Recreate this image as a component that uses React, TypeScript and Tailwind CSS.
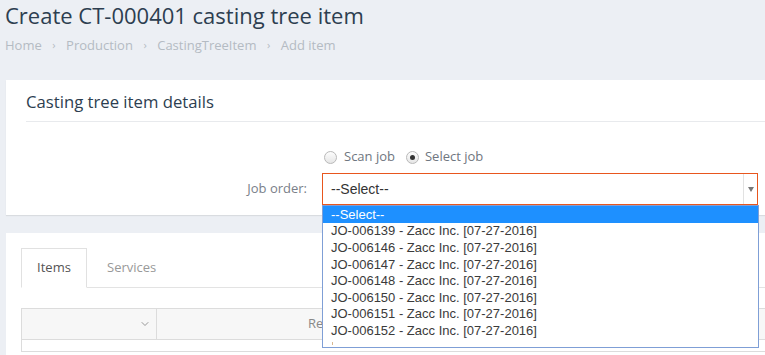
import { ChevronDown } from 'lucide-react';

const jobs = [
  'JO-006139 - Zacc Inc. [07-27-2016]',
  'JO-006146 - Zacc Inc. [07-27-2016]',
  'JO-006147 - Zacc Inc. [07-27-2016]',
  'JO-006148 - Zacc Inc. [07-27-2016]',
  'JO-006150 - Zacc Inc. [07-27-2016]',
  'JO-006151 - Zacc Inc. [07-27-2016]',
  'JO-006152 - Zacc Inc. [07-27-2016]',
];

function Radio({ checked }: { checked?: boolean }) {
  return (
    <span className="w-[13px] h-[13px] rounded-full border border-[#b9b9b9] bg-gradient-to-b from-[#fdfdfd] to-[#e6e6e6] flex items-center justify-center">
      {checked && <span className="w-[5px] h-[5px] rounded-full bg-[#333]" />}
    </span>
  );
}

export default function App() {
  return (
    <div className="w-[765px] h-[355px] overflow-hidden bg-[#eceff4] font-['Open_Sans',sans-serif]">
      {/* Page title */}
      <div className="px-[5px]">
        <h1 className="text-[22px] leading-[30px] text-[#2d3e50]">Create CT-000401 casting tree item</h1>
        <div className="mt-[6px] flex items-center gap-[10.5px] text-[13px] leading-[18px] text-[#b4bbc3]">
          <span>Home</span>
          <span className="text-[11px]">›</span>
          <span>Production</span>
          <span className="text-[11px]">›</span>
          <span>CastingTreeItem</span>
          <span className="text-[11px]">›</span>
          <span>Add item</span>
        </div>
      </div>

      {/* Details card */}
      <div className="mt-[26px] ml-[6px] w-[800px] bg-white shadow-[0_1px_1px_rgba(0,0,0,0.08)] px-[20px] pt-[10px] pb-[10px]">
        <h2 className="text-[16.7px] leading-[24px] font-medium text-[#2d3e50] pb-[7px] border-b border-[#e8eaed]">
          Casting tree item details
        </h2>
        <div className="mt-[28px] flex items-center h-[14px] pl-[298px] text-[13px] text-[#6f7680]">
          <Radio />
          <span className="ml-[7px]">Scan job</span>
          <span className="ml-[11px]"><Radio checked /></span>
          <span className="ml-[6px]">Select job</span>
        </div>
        <div className="mt-[9px] flex items-center">
          <label className="w-[281px] text-right text-[13px] text-[#7a8089]">Job order:</label>
          <div className="relative ml-[15px]">
            <div className="w-[436px] h-[32px] border border-[#e8561e] flex items-center font-['Liberation_Sans',Arial,sans-serif] text-[14px] text-[#333]">
              <span className="flex-1 pl-[8px]">--Select--</span>
              <span className="w-[14px] h-full border-l border-[#e2e2e2] flex items-center justify-center">
                <span className="w-0 h-0 border-l-[3.5px] border-r-[3.5px] border-t-[5px] border-l-transparent border-r-transparent border-t-[#777]" />
              </span>
            </div>
            {/* Open select list */}
            <div className="absolute left-0 top-[32px] z-10 w-[437px] h-[143px] bg-white border border-[#7f9fd6] font-['Liberation_Sans',Arial,sans-serif] text-[13px] leading-[15px] text-[#3b3b3b] overflow-hidden">
              <div className="bg-[#1e90ff] text-white pl-[8px] h-[16.6px] flex items-center">--Select--</div>
              {jobs.map((job) => (
                <div key={job} className="pl-[8px] h-[16.6px] flex items-center">{job}</div>
              ))}
              <div className="ml-[9px] mt-[3px] w-px h-[3px] bg-[#d9b890]" />
            </div>
          </div>
        </div>
      </div>

      {/* Items card */}
      <div className="mt-[18px] ml-[6px] w-[800px] h-[200px] bg-white px-[15px] pt-[15px]">
        <div className="flex border-b border-[#e3e3e3] h-[40px] text-[13px]">
          <div className="w-[66px] h-[40px] border border-[#e1e1e1] border-b-white bg-white flex items-center justify-center text-[#555] -mb-px">
            Items
          </div>
          <div className="px-[20px] flex items-center text-[#999]">Services</div>
        </div>
        <div className="mt-[20px] border border-[#dcdcdc]">
          <div className="flex h-[31px] bg-[#f7f7f7] border-b border-[#dcdcdc] text-[13px] text-[#888]">
            <div className="w-[135px] border-r border-[#dcdcdc] flex items-center justify-end pr-[5px]">
              <ChevronDown size={12} strokeWidth={1.5} className="text-[#777]" />
            </div>
            <div className="flex-1 flex items-center pl-[151px]">Remarks</div>
          </div>
          <div className="h-[11px] bg-white" />
        </div>
      </div>
    </div>
  );
}
